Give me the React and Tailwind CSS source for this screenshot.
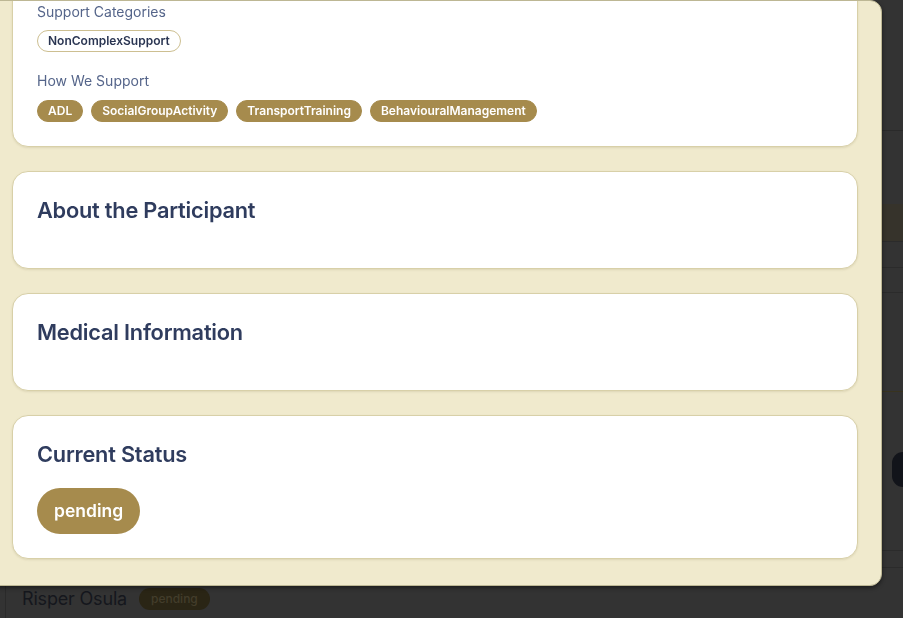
import { useLayoutEffect, useRef } from "react";

const SUPPORT_CATEGORIES = ["NonComplexSupport"];
const HOW_WE_SUPPORT = ["ADL", "SocialGroupActivity", "TransportTraining", "BehaviouralManagement"];

function Card({ title, children }) {
  return (
    <div className="bg-white rounded-2xl border border-[#d8d0a8] shadow-[0_1px_2px_rgba(120,110,60,0.15)] p-6">
      {title && (
        <h3 className="text-[21.75px] leading-7 font-semibold text-[#2f3c5e] mb-5 tracking-[-0.01em]">{title}</h3>
      )}
      {children}
    </div>
  );
}

function Field({ label, value }) {
  return (
    <div>
      <p className="text-sm text-[#55658a]">{label}</p>
      <p className="text-base text-[#2f3b5c] font-medium">{value}</p>
    </div>
  );
}

function BackgroundPage() {
  return (
    <div className="min-h-screen bg-[#333333] flex flex-col">
      <div className="h-[130px]" />
      <div className="h-[74px] border-t border-[#2a2a2a]" />
      <div className="h-[37px] bg-[#36332b]" />
      <div className="h-[26px] border-t border-[#2b2b2b]" />
      <div className="h-[25px] border-t border-[#2b2b2b]" />
      <div className="h-[99px] border-t border-[#2b2b2b]" />
      <div className="h-[159px] border-t border-[#38331f] flex items-start justify-end pt-[60px]">
        <div className="h-[35px] w-[11px] rounded-l-xl bg-[#12141a]" />
      </div>
      <div className="h-[17px] border-t border-[#2b2b2b]" />
      <div className="flex-1 border-t border-[#2b2b2b] ml-[5px] border-l border-l-[#2a2a2a] flex items-start gap-3 pl-[16px] pt-[19px]">
        <span className="text-lg leading-6 text-[#15171d] tracking-[-0.01em]">Risper Osula</span>
        <span className="mt-px rounded-full bg-[#2a2515] px-3 py-0.5 text-xs leading-[18px] font-medium text-[#433d2b]">pending</span>
      </div>
    </div>
  );
}

export default function App() {
  const scrollRef = useRef(null);
  const targetRef = useRef(null);

  useLayoutEffect(() => {
    const box = scrollRef.current;
    const target = targetRef.current;
    if (!box || !target) return;
    box.scrollTop = target.getBoundingClientRect().top - box.getBoundingClientRect().top - 1;
  }, []);

  return (
    <div className="font-['Inter','Noto_Sans',sans-serif] relative min-h-screen">
      <BackgroundPage />

      {/* Modal */}
      <div className="fixed inset-0 flex items-start">
        <div
          ref={scrollRef}
          className="ml-[-13px] w-[895px] h-[586px] overflow-hidden bg-[#f0eacd] border border-[#bdb794] rounded-xl shadow-[0_2px_4px_rgba(0,0,0,0.45)]"
        >
          <div className="pl-6 pr-[23px] pt-6 pb-[26px] flex flex-col gap-6">
            <div className="flex items-center justify-between">
              <h2 className="text-3xl font-bold text-[#2f3b5c]">Risper Osula</h2>
              <button className="text-sm px-3 py-1 rounded-full border border-[#c9b989] text-[#2f3b5c]">Close</button>
            </div>

            <Card title="Participant Details">
              <div className="grid grid-cols-2 gap-4">
                <Field label="NDIS Number" value="430 112 875" />
                <Field label="Date of Birth" value="12/04/1994" />
                <Field label="Phone" value="0412 345 678" />
                <Field label="Suburb" value="Parramatta" />
              </div>
            </Card>

            <Card title="Support Needs">
              <div ref={targetRef}>
                <p className="text-sm leading-5 text-[#55658a] mb-2">Support Categories</p>
                <div className="flex flex-wrap gap-2">
                  {SUPPORT_CATEGORIES.map((c) => (
                    <span
                      key={c}
                      className="rounded-full border border-[#cdbf91] bg-white px-2.5 py-0.5 text-xs leading-4 font-semibold text-[#2a3552]"
                    >
                      {c}
                    </span>
                  ))}
                </div>
                <p className="text-sm leading-5 text-[#55658a] mt-[19px] mb-[9px]">How We Support</p>
                <div className="flex flex-wrap gap-2">
                  {HOW_WE_SUPPORT.map((c) => (
                    <span
                      key={c}
                      className="rounded-full border border-[#a68b4d] bg-[#a68b4d] px-2.5 py-0.5 text-xs leading-4 font-semibold text-white"
                    >
                      {c}
                    </span>
                  ))}
                </div>
              </div>
            </Card>

            <Card title="About the Participant" />
            <Card title="Medical Information" />
            <Card title="Current Status">
              <span className="inline-flex items-center h-[46px] px-[17px] rounded-full bg-[#a68b4d] text-white text-[17.5px] font-semibold">
                pending
              </span>
            </Card>
          </div>
        </div>
      </div>
    </div>
  );
}
